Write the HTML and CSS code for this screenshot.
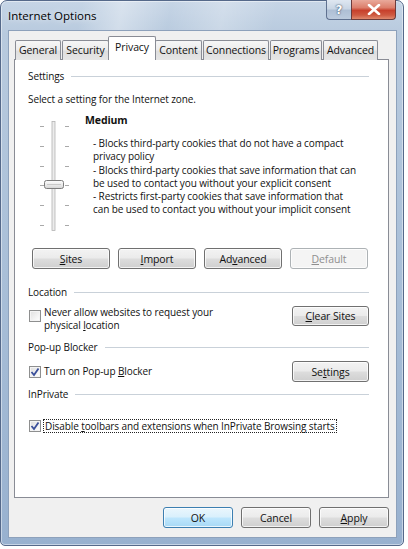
FILE: index.html
```html
<!DOCTYPE html>
<html>
<head>
<meta charset="utf-8">
<link rel="stylesheet" href="styles.css">
</head>
<body>
<div class="window">
  <div class="titlebar">
    <span class="title">Internet Options</span>
    <div class="caption">
      <div class="cap-btn help">?</div>
      <div class="cap-btn close">
        <svg width="14" height="11" viewBox="0 0 14 11"><path d="M2 1 L12 10 M12 1 L2 10" stroke="#fff" stroke-width="2.6" stroke-linecap="round"/></svg>
      </div>
    </div>
  </div>
  <div class="client">
    <div class="tabs">
      <div class="tab t-general">General</div>
      <div class="tab t-security">Security</div>
      <div class="tab t-privacy active">Privacy</div>
      <div class="tab t-content">Content</div>
      <div class="tab t-connections">Connections</div>
      <div class="tab t-programs">Programs</div>
      <div class="tab t-advanced">Advanced</div>
    </div>
    <div class="panel">
      <div class="group-head g-settings"><span>Settings</span><i class="rule"></i></div>
      <div class="intro">Select a setting for the Internet zone.</div>
      <div class="zone">
        <svg class="slider" width="32" height="110" viewBox="0 0 32 110">
          <defs>
            <linearGradient id="thumb" x1="0" y1="0" x2="0" y2="1">
              <stop offset="0" stop-color="#fdfdfd"/>
              <stop offset="0.5" stop-color="#ececec"/>
              <stop offset="1" stop-color="#d4d4d4"/>
            </linearGradient>
          </defs>
          <rect x="14" y="0.5" width="3" height="109" fill="#ececec" stroke="#b3b3b3" stroke-width="0.8"/>
          <g stroke="#a9a9a9" stroke-width="1">
            <path d="M2 5.5h4M27 5.5h4"/>
            <path d="M2 25.5h4M27 25.5h4"/>
            <path d="M2 45.5h4M27 45.5h4"/>
            <path d="M2 64.5h4M27 64.5h4"/>
            <path d="M2 84.5h4M27 84.5h4"/>
            <path d="M2 104.5h4M27 104.5h4"/>
          </g>
          <rect x="6.5" y="59.5" width="19" height="8" rx="2" fill="url(#thumb)" stroke="#7d7d7d"/>
          <path d="M9 63.5h14" stroke="#c9c9c9"/>
        </svg>
        <div class="zone-text">
          <div class="level">Medium</div>
          <div class="desc">
            - Blocks third-party cookies that do not have a compact<br>
            privacy policy<br>
            - Blocks third-party cookies that save information that can<br>
            be used to contact you without your explicit consent<br>
            - Restricts first-party cookies that save information that<br>
            can be used to contact you without your implicit consent
          </div>
        </div>
      </div>
      <div class="btn-row">
        <div class="btn"><u>S</u>ites</div>
        <div class="btn"><u>I</u>mport</div>
        <div class="btn">Ad<u>v</u>anced</div>
        <div class="btn disabled"><u>D</u>efault</div>
      </div>

      <div class="group-head g-location"><span>Location</span><i class="rule"></i></div>
      <div class="opt-row r-location">
        <div class="check-label">
          <span class="checkbox"></span>
          <span class="label-text">Never allow websites to request your<br>physical <u>l</u>ocation</span>
        </div>
        <div class="btn side"><u>C</u>lear Sites</div>
      </div>

      <div class="group-head g-popup"><span>Pop-up Blocker</span><i class="rule"></i></div>
      <div class="opt-row r-popup">
        <div class="check-label">
          <span class="checkbox checked"><svg width="10" height="10" viewBox="0 0 10 10"><path d="M1.5 5 L4 8 L8.5 1.5" fill="none" stroke="#3a4f9a" stroke-width="1.8"/></svg></span>
          <span class="label-text">Turn on Pop-up <u>B</u>locker</span>
        </div>
        <div class="btn side">Se<u>t</u>tings</div>
      </div>

      <div class="group-head g-inprivate"><span>InPrivate</span><i class="rule"></i></div>
      <div class="opt-row r-inprivate">
        <div class="check-label">
          <span class="checkbox checked"><svg width="10" height="10" viewBox="0 0 10 10"><path d="M1.5 5 L4 8 L8.5 1.5" fill="none" stroke="#3a4f9a" stroke-width="1.8"/></svg></span>
          <span class="label-text focus">Disable <u>t</u>oolbars and extensions when InPrivate Browsing starts</span>
        </div>
      </div>
    </div>
    <div class="dialog-buttons">
      <div class="btn dlg default">OK</div>
      <div class="btn dlg">Cancel</div>
      <div class="btn dlg"><u>A</u>pply</div>
    </div>
  </div>
</div>
</body>
</html>
```
FILE: styles.css
```css
html, body {
  margin: 0;
  padding: 0;
  background: #ffffff;
}

body {
  font-family: "Open Sans", "Noto Sans", sans-serif;
  font-size: 10px;
  letter-spacing: -0.1px;
  color: #111;
}

.window {
  width: 404px;
  height: 546px;
  box-sizing: border-box;
  border: 1px solid #55698a;
  border-radius: 7px 7px 5px 5px;
  background:
    linear-gradient(100deg, rgba(255,255,255,0) 20%, rgba(255,255,255,0.35) 30%, rgba(255,255,255,0) 42%, rgba(255,255,255,0.25) 55%, rgba(255,255,255,0) 68%) top / 100% 30px no-repeat,
    linear-gradient(to bottom, #c6d5e6 0%, #b8cade 6%, #a9bfd8 50%, #98b1cf 100%);
  box-shadow: inset 0 0 0 1px rgba(255,255,255,0.45);
  padding: 0 6px 7px 7px;
  display: flex;
  flex-direction: column;
}

.titlebar {
  height: 29px;
  flex: none;
  display: flex;
  align-items: flex-start;
  justify-content: space-between;
}

.title {
  margin-top: 7px;
  font-size: 11.5px;
  letter-spacing: 0;
  line-height: 16px;
  color: #000;
  text-shadow: 0 0 6px rgba(255,255,255,0.9);
}

.caption {
  display: flex;
  margin-top: -1px;
  margin-right: 1px;
}

.cap-btn {
  height: 20px;
  box-sizing: border-box;
  border: 1px solid #5f7190;
  border-top: none;
  display: flex;
  align-items: center;
  justify-content: center;
}

.help {
  width: 25px;
  border-radius: 0 0 0 4px;
  border-right: none;
  background: linear-gradient(to bottom, #dfe7f1 0%, #c9d6e5 45%, #aebfd5 55%, #bccbde 100%);
  color: #fff;
  font-family: "DejaVu Sans", sans-serif;
  font-weight: bold;
  font-size: 12px;
  text-shadow: 0 0 2px #3f516c, 0 0 1px #3f516c;
}

.close {
  width: 45px;
  border-radius: 0 0 4px 0;
  background: linear-gradient(to bottom, #e9a99b 0%, #dc7f6c 40%, #c7402c 55%, #cf5a42 80%, #e08a6e 100%);
  border-color: #6c3b3b;
}

.client {
  flex: 1;
  background: #f0f0f0;
  border: 1px solid #8da1bb;
  padding: 5px 7px 0 5px;
  display: flex;
  flex-direction: column;
}

.tabs {
  display: flex;
  align-items: flex-end;
  height: 24px;
  padding-left: 1px;
  position: relative;
  z-index: 1;
  margin-bottom: -1px;
  font-size: 10.5px;
}

.tab {
  height: 20px;
  box-sizing: border-box;
  border: 1px solid #898c95;
  border-bottom: none;
  border-radius: 2px 2px 0 0;
  background: linear-gradient(to bottom, #f6f6f6 0%, #ececec 45%, #dedede 55%, #e6e6e6 100%);
  display: flex;
  align-items: center;
  justify-content: center;
  margin-right: 1px;
  line-height: 14px;
  padding-bottom: 1px;
}

.tab.active {
  height: 24px;
  background: #ffffff;
  margin-left: -2px;
  margin-right: -1px;
  padding-bottom: 4px;
}

.t-general { width: 46px; }
.t-security { width: 47px; }
.t-privacy { width: 48px; }
.t-content { width: 47px; }
.t-connections { width: 66px; }
.t-programs { width: 52px; }
.t-advanced { width: 55px; }

.panel {
  height: 439px;
  box-sizing: border-box;
  background: #ffffff;
  border: 1px solid #898c95;
  padding: 0 19px 0 13px;
  display: flex;
  flex-direction: column;
}

.group-head {
  display: flex;
  align-items: center;
  height: 14px;
  line-height: 14px;
}

.group-head .rule {
  flex: 1;
  height: 1px;
  background: #c9d1d9;
  margin-left: 7px;
  margin-top: 1px;
}

.g-settings { margin-top: 9px; }
.g-location { margin-top: 16px; }
.g-popup { margin-top: 8px; }
.g-inprivate { margin-top: 5px; }

.intro {
  margin-top: 9px;
  line-height: 14px;
}

.zone {
  display: flex;
  margin-top: 7px;
}

.slider {
  margin: 8px 0 0 10px;
  flex: none;
}

.zone-text {
  margin-left: 15px;
  white-space: nowrap;
}

.level {
  font-weight: bold;
  line-height: 14px;
  font-size: 10.5px;
}

.desc {
  margin-top: 10px;
  padding-left: 8px;
  line-height: 13.3px;
}

.btn-row {
  display: flex;
  gap: 8px;
  margin-top: 17px;
  padding-left: 4px;
}

.btn {
  width: 78px;
  height: 21px;
  box-sizing: border-box;
  border: 1px solid #707070;
  border-radius: 3px;
  background: linear-gradient(to bottom, #f3f3f3 0%, #ebebeb 48%, #dddddd 52%, #cfcfcf 100%);
  box-shadow: inset 0 0 0 1px rgba(255,255,255,0.75);
  display: flex;
  align-items: center;
  justify-content: center;
  line-height: 14px;
  color: #111;
  font-size: 10.5px;
}

.btn.disabled {
  border-color: #adb2b5;
  background: #f4f4f4;
  color: #8f8f8f;
}

.btn.side {
  width: 77px;
}

.opt-row {
  display: flex;
  justify-content: space-between;
  align-items: flex-start;
  white-space: nowrap;
}

.r-location { margin-top: 7px; }
.r-popup { margin-top: 7px; align-items: center; }
.r-inprivate { margin-top: 18px; }

.r-location .btn { height: 20px; }

.check-label {
  display: flex;
  align-items: flex-start;
}

.r-popup .check-label,
.r-inprivate .check-label {
  align-items: center;
}

.checkbox {
  width: 12px;
  height: 12px;
  box-sizing: border-box;
  border: 1px solid #8e8f8f;
  background: linear-gradient(135deg, #e0e0e0 0%, #f6f6f6 70%, #ffffff 100%);
  box-shadow: inset 0 0 0 1px #f4f4f4;
  margin-left: 1px;
  margin-right: 2px;
  display: flex;
  align-items: center;
  justify-content: center;
  flex: none;
}

.r-location .checkbox { margin-top: 4px; }

.checkbox.checked {
  background: linear-gradient(135deg, #dcdcdc 0%, #f2f2f2 60%, #ffffff 100%);
}

.label-text {
  line-height: 13px;
  padding: 0 1px;
}

.label-text.focus {
  border: 1px dotted #222;
  line-height: 12px;
}

.dialog-buttons {
  display: flex;
  justify-content: flex-end;
  gap: 8px;
  margin-top: 9px;
}

.btn.dlg {
  width: 70px;
  height: 21px;
}

.btn.default {
  border-color: #3c7fb1;
  background: linear-gradient(to bottom, #eaf6fd 0%, #d9f0fc 48%, #bee6fd 52%, #a7d9f5 100%);
}
```
